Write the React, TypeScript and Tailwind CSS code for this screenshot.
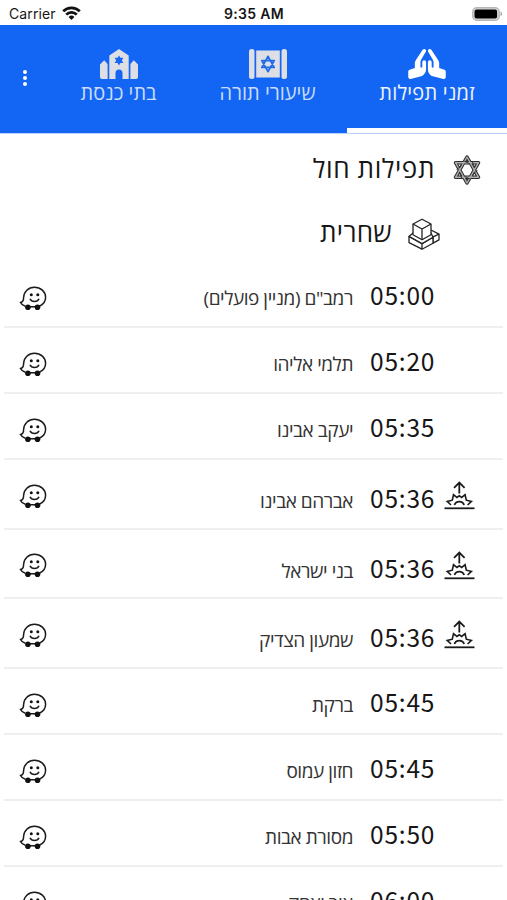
import React from "react";

type Prayer = { time: string; name: string; sunrise?: boolean };

const prayers: Prayer[] = [
  { time: "05:00", name: 'רמב"ם (מניין פועלים)' },
  { time: "05:20", name: "תלמי אליהו" },
  { time: "05:35", name: "יעקב אבינו" },
  { time: "05:36", name: "אברהם אבינו", sunrise: true },
  { time: "05:36", name: "בני ישראל", sunrise: true },
  { time: "05:36", name: "שמעון הצדיק", sunrise: true },
  { time: "05:45", name: "ברקת" },
  { time: "05:45", name: "חזון עמוס" },
  { time: "05:50", name: "מסורת אבות" },
  { time: "06:00", name: "אור יצחק" },
];

function WifiIcon() {
  return (
    <svg className="h-[15px] w-[19px]" viewBox="0 0 19 15" fill="none" stroke="#111" strokeWidth="2.7">
      <path d="M1.2 5.3a11.8 11.8 0 0 1 16.6 0M4.2 8.6a7.6 7.6 0 0 1 10.6 0" />
      <path d="M9.5 14 6.6 11a4.2 4.2 0 0 1 5.8 0Z" fill="#111" stroke="none" />
    </svg>
  );
}

function BatteryIcon() {
  return (
    <svg className="h-[14px] w-[31px]" viewBox="0 0 31 14">
      <rect x=".8" y=".8" width="26.4" height="12.4" rx="4" fill="#ddd" stroke="#b5b5b5" strokeWidth="1.4" />
      <rect x="2.5" y="2.4" width="22.6" height="9.2" rx="2" fill="#000" />
      <path d="M28.5 4.8c2.2.5 2.2 3.9 0 4.4Z" fill="#aaa" />
    </svg>
  );
}

function PrayIcon() {
  return (
    <svg className="h-[30px] w-[38px]" viewBox="0 0 640 512" fill="#fff">
      <path d="M272 191.91c-17.6 0-32 14.4-32 32v80c0 8.84-7.16 16-16 16s-16-7.16-16-16v-76.55c0-17.39 4.72-34.47 13.69-49.39l77.75-129.59c9.09-15.16 4.19-34.81-10.97-43.91-14.45-8.67-32.72-4.3-42.3 9.21-.2.23-.62.21-.79.48l-117.26 175.9C117.56 205.9 112 224.31 112 243.29v80.23l-90.12 30.04A31.974 31.974 0 0 0 0 383.91v96c0 10.82 8.52 32 32 32 2.69 0 5.41-.34 8.06-1.03l179.19-46.62C269.16 449.99 304 403.8 304 351.91v-128c0-17.6-14.4-32-32-32zm346.12 161.65L528 323.6v-80.23c0-18.98-5.56-37.39-16.12-53.23L394.62 14.25c-.18-.27-.59-.24-.79-.48-9.58-13.51-27.85-17.88-42.3-9.21-15.16 9.09-20.06 28.75-10.97 43.91l77.75 129.59c8.97 14.92 13.69 32 13.69 49.39V304c0 8.84-7.16 16-16 16s-16-7.16-16-16v-80c0-17.6-14.4-32-32-32s-32 14.4-32 32v128c0 51.89 34.84 98.08 84.75 112.34l179.19 46.62c2.66.69 5.38 1.03 8.06 1.03 23.48 0 32-21.18 32-32v-96c0-13.77-8.81-25.99-21.88-30.43z" />
    </svg>
  );
}

function TorahIcon() {
  return (
    <svg className="h-[30px] w-[38px]" viewBox="0 0 38 30" fill="#dedfe5">
      <rect x="0" y="0" width="5.5" height="30" rx="2.5" />
      <rect x="32.5" y="0" width="5.5" height="30" rx="2.5" />
      <rect x="7.2" y="1.5" width="23.6" height="27" />
      <path d="M19 7.4 25.2 18.4H12.8ZM19 22.6 25.2 11.6H12.8Z" fill="none" stroke="#1f6bea" strokeWidth="1.8" strokeLinejoin="round" />
    </svg>
  );
}

function SynagogueIcon() {
  return (
    <svg className="h-[30px] w-[38px]" viewBox="0 0 38 30" fill="#dedfe5">
      <path d="M4.2 11.2 7.6 15v15H2a2 2 0 0 1-2-2V15.5ZM33.8 11.2 30.4 15v15H36a2 2 0 0 0 2-2V15.5Z" />
      <path d="M19 0 28.7 6.5V30H22.5v-6a3.5 3.5 0 0 0-7 0v6H9.3V6.5Z" />
      <path d="m19 6.4 1.4 2.4h3L21.8 11.4l1.6 2.6h-3L19 16.4 17.6 14h-3l1.6-2.6-1.6-2.6h3Z" fill="#1767f4" />
    </svg>
  );
}

function StarIcon() {
  return (
    <svg className="h-[32px] w-[28px]" viewBox="0 0 28 32" fill="none" strokeLinejoin="round">
      <path d="M14 3 25.5 23.3H2.5ZM14 29 25.5 8.7H2.5Z" stroke="#2d2d2d" strokeWidth="3.5" />
      <path d="M14 3 25.5 23.3H2.5ZM14 29 25.5 8.7H2.5Z" stroke="#b0b0b0" strokeWidth="1.4" />
      <path d="m11 7 5.5 2.6M19 7.2l2.6 6M24.5 16l-5 5M17 25l-5.5-2.6M9 24.8l-2.6-6M3.5 16l5-5" stroke="#222" strokeWidth=".8" />
    </svg>
  );
}

function TefillinIcon() {
  return (
    <svg className="h-[32px] w-[32px]" viewBox="0 0 32 32" fill="#fff" stroke="#222" strokeWidth="1.3" strokeLinejoin="round">
      <path d="m23 12 8 4.2v5.7l-6 3.2-8-5Z" />
      <path d="m25 18.9 6-2.7M25 18.9v6" />
      <path d="m1 18.4 13 7.2 11-6.3v6L14 31.2 1 24.6Z" />
      <path d="M1 18.4 5 15l9 5 9-5 2 4.3-11 6.3ZM14 25.6v5.6" />
      <path d="M14 1.2 23 6v10.8l-9 5-9-5V6Z" />
      <path d="m5 6 9 5 9-5M14 11v10.8" />
    </svg>
  );
}

function SunriseIcon() {
  return (
    <svg className="h-[29px] w-[31px]" viewBox="0 0 31 29" fill="none" stroke="#1b1b1b" strokeWidth="1.8">
      <path d="M.5 27.3h30" strokeWidth="1.8" />
      <path d="M15.3 12.5V2M10 6.8l5.3-5.2 5.3 5.2" />
      <path d="M7 24 3.2 20.4l5.1-1.2 1.2-5.6 3.4 2.8 2.4-1.6 2.4 1.6 3.4-2.8 1.2 5.6 5.1 1.2L23.6 24" strokeWidth="1.6" />
      <path d="M10.5 24c1.4-4.6 8.2-4.6 9.6 0" />
    </svg>
  );
}

function WazeIcon() {
  return (
    <svg className="h-[25px] w-[28px]" viewBox="0 0 28 25" fill="none" stroke="#1b1b1b" strokeWidth="1.5">
      <path d="M6.3 20.2C3.5 19.4 2.2 18 1.5 16.5c2.8-.5 3.1-2 3.1-5C4.8 5.7 9.4 1.2 15.4 1.2c6.3 0 11.2 4.4 11.2 10.1 0 4.1-2.5 7.4-6.3 9M11 20.8h5" />
      <circle cx="8.9" cy="21.2" r="2.8" fill="#111" stroke="none" />
      <circle cx="18.5" cy="21.2" r="2.8" fill="#111" stroke="none" />
      <circle cx="12.3" cy="8.8" r="1.5" fill="#111" stroke="none" />
      <circle cx="18.8" cy="8.8" r="1.5" fill="#111" stroke="none" />
      <path d="M11 12.8c1.6 3.7 7.4 3.7 9 0" />
    </svg>
  );
}

function Tab({ icon, label, active, className }: { icon: React.ReactNode; label: string; active?: boolean; className: string }) {
  return (
    <div className={`flex h-[108px] flex-col items-center pt-6 ${className}`}>
      {icon}
      <span className={`text-[20px] leading-7 whitespace-nowrap ${active ? "tracking-[0.2px] text-[#f0f4fd]" : "text-[#cbdcfa]"}`}>{label}</span>
      {active && <div className="mt-auto h-[5px] w-full bg-white" />}
    </div>
  );
}

function Row({ time, name, sunrise }: Prayer) {
  return (
    <div className={`mx-1 flex shrink-0 items-start border-b-2 border-[#efeff0] pr-7 pl-[15px] ${sunrise ? "h-[69.7px]" : "h-[66px]"}`}>
      <div className="h-full w-[41px] shrink-0 pt-[21px]">{sunrise && <SunriseIcon />}</div>
      <div className={`flex flex-1 items-baseline ${sunrise ? "pt-[20px]" : "pt-[15px]"}`}>
        <span dir="ltr" className="w-[64px] font-['Noto_Sans_CJK_JP',sans-serif] text-[24.5px] leading-9 tracking-[0.8px] whitespace-nowrap text-[#161616]">{time}</span>
        <span className="mr-[17px] text-[19px] leading-[34px] tracking-[-0.45px] whitespace-nowrap text-[#333]">{name}</span>
      </div>
      <div className="pt-[23.5px]"><WazeIcon /></div>
    </div>
  );
}

export default function App() {
  return (
    <div dir="rtl" className="flex h-[900px] w-[507px] flex-col overflow-hidden bg-white font-['Open_Sans',sans-serif] text-[#161616]">
      <div dir="ltr" className="grid h-[25px] shrink-0 grid-cols-3 items-center pr-1 pl-[9px] pt-0.5 font-['Inter',sans-serif]">
        <div className="flex items-center gap-1.5 text-[14px] tracking-[0.1px]"><span>Carrier</span><WifiIcon /></div>
        <span className="pr-1 text-center text-[14px] font-semibold tracking-[0.35px]">9:35 AM</span>
        <div className="flex justify-end"><BatteryIcon /></div>
      </div>
      <div className="flex h-[109px] shrink-0 border-b border-[#b9d2fb] bg-[#1366f3]">
        <Tab icon={<PrayIcon />} label="זמני תפילות" active className="w-[160px]" />
        <Tab icon={<TorahIcon />} label="שיעורי תורה" className="w-[159px]" />
        <Tab icon={<SynagogueIcon />} label="בתי כנסת" className="w-[139px]" />
        <div className="flex flex-1 flex-col items-center gap-[2px] pt-[45px]">
          <i className="h-1 w-1 rounded-full bg-white" />
          <i className="h-1 w-1 rounded-full bg-white" />
          <i className="h-1 w-1 rounded-full bg-white" />
        </div>
      </div>
      <div className="flex h-[64px] shrink-0 items-center gap-[18px] pt-2 pr-[26px]">
        <StarIcon />
        <h1 className="mb-1 text-[26px] leading-9 tracking-[0.6px]">תפילות חול</h1>
      </div>
      <div className="flex h-[64px] shrink-0 items-center gap-[16px] pt-2 pr-[67px]">
        <TefillinIcon />
        <h2 className="mb-1 text-[26px] leading-9 tracking-[0.3px]">שחרית</h2>
      </div>
      {prayers.map((p, i) => <Row key={i} {...p} />)}
    </div>
  );
}
